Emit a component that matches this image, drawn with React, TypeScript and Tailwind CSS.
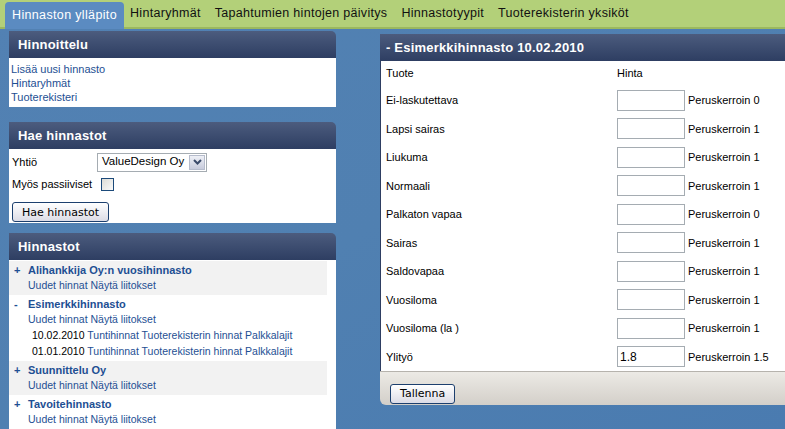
import React from 'react';

const navItems = ['Hintaryhmät', 'Tapahtumien hintojen päivitys', 'Hinnastotyypit', 'Tuoterekisterin yksiköt'];

const rows: {name: string; value: string; factor: string}[] = [
    {name: 'Ei-laskutettava', value: '', factor: '0'},
    {name: 'Lapsi sairas', value: '', factor: '1'},
    {name: 'Liukuma', value: '', factor: '1'},
    {name: 'Normaali', value: '', factor: '1'},
    {name: 'Palkaton vapaa', value: '', factor: '0'},
    {name: 'Sairas', value: '', factor: '1'},
    {name: 'Saldovapaa', value: '', factor: '1'},
    {name: 'Vuosiloma', value: '', factor: '1'},
    {name: 'Vuosiloma (la )', value: '', factor: '1'},
    {name: 'Ylityö', value: '1.8', factor: '1.5'},
];

const priceLists = [
    {title: 'Alihankkija Oy:n vuosihinnasto', open: false, gray: true},
    {title: 'Esimerkkihinnasto', open: true, gray: false},
    {title: 'Suunnittelu Oy', open: false, gray: true},
    {title: 'Tavoitehinnasto', open: false, gray: false},
];

function PanelHeader({title}: {title: string}) {
    return (
        <div className="h-[27px] flex items-center pl-[9px] rounded-tr-[5px] bg-gradient-to-b from-[#4c5c7e] to-[#2e3e62] text-white font-bold text-[13px] tracking-[0.2px]">
            {title}
        </div>
    );
}

function OldButton({label}: {label: string}) {
    return (
        <button className="h-[20px] px-[9px] rounded-[3px] border border-[#1c3f6e] bg-gradient-to-b from-[#ffffff] to-[#dcdce6] text-[11px] leading-none text-black [font-family:'DejaVu_Sans',Verdana,sans-serif]">
            {label}
        </button>
    );
}

export default function App() {
    return (
        <div className="w-[785px] h-[429px] overflow-hidden bg-gradient-to-br from-[#5281b3] via-[#5080b1] to-[#4a7bb0] [font-family:'Liberation_Sans',Arial,sans-serif]">
            {/* top navigation */}
            <div className="h-[29px] flex items-end bg-[#b3d079] border-b-[2px] border-[#9bb85f] pl-[5px]">
                <div className="h-[27px] px-[7px] flex items-center rounded-t-[4px] bg-[#5b8bc1] text-white text-[12.5px] tracking-[0.35px] -mb-[2px]">
                    Hinnaston ylläpito
                </div>
                <div className="h-[27px] flex items-center gap-[14px] pl-[6px] text-[12.5px] text-[#111] tracking-[0.3px]">
                    {navItems.map((n) => (
                        <span key={n}>{n}</span>
                    ))}
                </div>
            </div>

            <div className="flex">
                {/* left column */}
                <div className="w-[327px] ml-[9px] mt-[2px] flex flex-col">
                    <PanelHeader title="Hinnoittelu" />
                    <div className="h-[49px] bg-white pt-[4px] pl-[2px] text-[11px] leading-[14px] text-[#1e4f93] flex flex-col">
                        <span>Lisää uusi hinnasto</span>
                        <span>Hintaryhmät</span>
                        <span>Tuoterekisteri</span>
                    </div>

                    <div className="mt-[15px]">
                        <PanelHeader title="Hae hinnastot" />
                    </div>
                    <div className="h-[74px] bg-white pl-[3px] text-[11px] text-black">
                        <div className="flex items-center h-[24px] pt-[2px]">
                            <span className="w-[85px]">Yhtiö</span>
                            <div className="w-[110px] h-[19px] border border-[#a5acb2] flex items-center justify-between pl-[4px] pr-[1px] text-[11.5px]">
                                <span>ValueDesign Oy</span>
                                <span className="w-[16px] h-[15px] bg-gradient-to-b from-[#eef0f6] to-[#c7cbdc] border border-[#b6bccc] flex items-center justify-center">
                                    <svg width="9" height="6" viewBox="0 0 9 6">
                                        <path d="M1 1 L4.5 4.5 L8 1" stroke="#3a4a6a" strokeWidth="2" fill="none" />
                                    </svg>
                                </span>
                            </div>
                        </div>
                        <div className="flex items-center h-[22px]">
                            <span className="w-[89px]">Myös passiiviset</span>
                            <span className="w-[13px] h-[13px] border border-[#1c4a7a] bg-gradient-to-br from-[#dcdcd6] to-[#fafafa]" />
                        </div>
                        <div className="pt-[7px]">
                            <OldButton label="Hae hinnastot" />
                        </div>
                    </div>

                    <div className="mt-[10px]">
                        <PanelHeader title="Hinnastot" />
                    </div>
                    <div className="bg-white pt-[1px] h-[180px] text-[10.5px]">
                        {priceLists.map((p) => (
                            <div key={p.title} className={`w-[318px] py-[2px] ${p.gray ? 'bg-[#f2f2f2]' : 'bg-white'}`}>
                                <div className="flex items-center h-[15px] text-[#1e4f93] font-bold text-[11px]">
                                    <span className="w-[19px] pl-[5px]">{p.open ? '-' : '+'}</span>
                                    <span>{p.title}</span>
                                </div>
                                <div className="pl-[19px] h-[15px] leading-[15px] text-[#1e4f93]">Uudet hinnat Näytä liitokset</div>
                                {p.open && (
                                    <div className="pl-[23px] leading-[16px]">
                                        {['10.02.2010', '01.01.2010'].map((d) => (
                                            <div key={d}>
                                                <span className="text-black">{d}</span>{' '}
                                                <span className="text-[#1e4f93]">Tuntihinnat Tuoterekisterin hinnat Palkkalajit</span>
                                            </div>
                                        ))}
                                    </div>
                                )}
                            </div>
                        ))}
                    </div>
                </div>

                {/* right panel */}
                <div className="ml-[44px] mt-[5px] flex-1 flex flex-col">
                    <div className="h-[27px] flex items-center pl-[6px] bg-gradient-to-b from-[#4c5c7e] to-[#2e3e62] text-white font-bold text-[13px] tracking-[0.2px]">
                        - Esimerkkihinnasto 10.02.2010
                    </div>
                    <div className="bg-white border-l border-[#2e3e62] text-[11px] text-black">
                        <div className="h-[25px] flex items-center pl-[5px]">
                            <span className="w-[231px]">Tuote</span>
                            <span>Hinta</span>
                        </div>
                        {rows.map((r) => (
                            <div key={r.name} className="h-[28.5px] flex items-center pl-[5px]">
                                <span className="w-[231px]">{r.name}</span>
                                <span className="w-[68px] h-[21px] border border-[#a5acb2] flex items-center pl-[2px] text-[12px]">{r.value}</span>
                                <span className="pl-[3px]">Peruskerroin {r.factor}</span>
                            </div>
                        ))}
                    </div>
                    <div className="h-[34px] border-t border-[#b6b3ad] rounded-bl-[6px] bg-gradient-to-b from-[#eceae5] to-[#d3cfc9] pl-[10px] pt-[8px]">
                        <OldButton label="Tallenna" />
                    </div>
                </div>
            </div>
        </div>
    );
}
